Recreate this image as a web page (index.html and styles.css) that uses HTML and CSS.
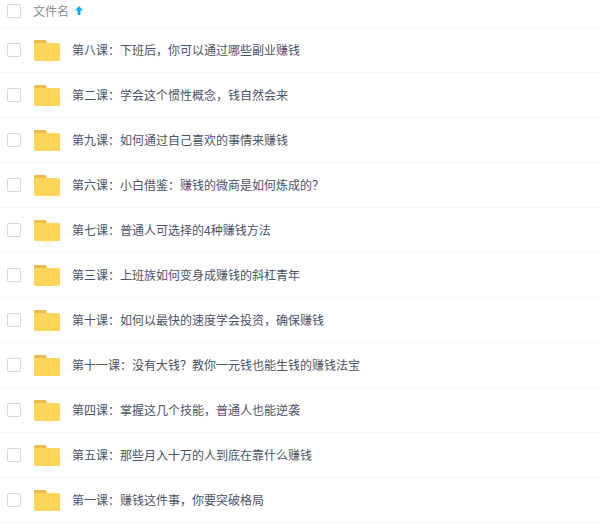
FILE: index.html
```html
<!DOCTYPE html>
<html lang="zh-CN">
<head>
<meta charset="utf-8">
<title>文件列表</title>
<link rel="stylesheet" href="styles.css">
</head>
<body>
<div class="list">
  <div class="head">
    <span class="check"></span>
    <span class="head-name">文件名</span>
    <svg class="arrow" width="8" height="9" viewBox="0 0 8 9"><path d="M4 0 L8 4.4 H5.4 V9 H2.6 V4.4 H0 Z" fill="#09aaff"/></svg>
  </div>
  <div class="row"><span class="check"></span><svg class="folder" width="26" height="21" viewBox="0 0 26 21"><path d="M1 0 H11 Q12.5 0 12.5 1.5 V4 H0 V1 Q0 0 1 0 Z" fill="#eebc4c"/><rect y="3" width="26" height="18" rx="1.5" fill="#ffd659"/></svg><span class="name">第八课：下班后，你可以通过哪些副业赚钱</span></div>
  <div class="row"><span class="check"></span><svg class="folder" width="26" height="21" viewBox="0 0 26 21"><path d="M1 0 H11 Q12.5 0 12.5 1.5 V4 H0 V1 Q0 0 1 0 Z" fill="#eebc4c"/><rect y="3" width="26" height="18" rx="1.5" fill="#ffd659"/></svg><span class="name">第二课：学会这个惯性概念，钱自然会来</span></div>
  <div class="row"><span class="check"></span><svg class="folder" width="26" height="21" viewBox="0 0 26 21"><path d="M1 0 H11 Q12.5 0 12.5 1.5 V4 H0 V1 Q0 0 1 0 Z" fill="#eebc4c"/><rect y="3" width="26" height="18" rx="1.5" fill="#ffd659"/></svg><span class="name">第九课：如何通过自己喜欢的事情来赚钱</span></div>
  <div class="row"><span class="check"></span><svg class="folder" width="26" height="21" viewBox="0 0 26 21"><path d="M1 0 H11 Q12.5 0 12.5 1.5 V4 H0 V1 Q0 0 1 0 Z" fill="#eebc4c"/><rect y="3" width="26" height="18" rx="1.5" fill="#ffd659"/></svg><span class="name">第六课：小白借鉴：赚钱的微商是如何炼成的？</span></div>
  <div class="row"><span class="check"></span><svg class="folder" width="26" height="21" viewBox="0 0 26 21"><path d="M1 0 H11 Q12.5 0 12.5 1.5 V4 H0 V1 Q0 0 1 0 Z" fill="#eebc4c"/><rect y="3" width="26" height="18" rx="1.5" fill="#ffd659"/></svg><span class="name">第七课：普通人可选择的4种赚钱方法</span></div>
  <div class="row"><span class="check"></span><svg class="folder" width="26" height="21" viewBox="0 0 26 21"><path d="M1 0 H11 Q12.5 0 12.5 1.5 V4 H0 V1 Q0 0 1 0 Z" fill="#eebc4c"/><rect y="3" width="26" height="18" rx="1.5" fill="#ffd659"/></svg><span class="name">第三课：上班族如何变身成赚钱的斜杠青年</span></div>
  <div class="row"><span class="check"></span><svg class="folder" width="26" height="21" viewBox="0 0 26 21"><path d="M1 0 H11 Q12.5 0 12.5 1.5 V4 H0 V1 Q0 0 1 0 Z" fill="#eebc4c"/><rect y="3" width="26" height="18" rx="1.5" fill="#ffd659"/></svg><span class="name">第十课：如何以最快的速度学会投资，确保赚钱</span></div>
  <div class="row"><span class="check"></span><svg class="folder" width="26" height="21" viewBox="0 0 26 21"><path d="M1 0 H11 Q12.5 0 12.5 1.5 V4 H0 V1 Q0 0 1 0 Z" fill="#eebc4c"/><rect y="3" width="26" height="18" rx="1.5" fill="#ffd659"/></svg><span class="name">第十一课：没有大钱？教你一元钱也能生钱的赚钱法宝</span></div>
  <div class="row"><span class="check"></span><svg class="folder" width="26" height="21" viewBox="0 0 26 21"><path d="M1 0 H11 Q12.5 0 12.5 1.5 V4 H0 V1 Q0 0 1 0 Z" fill="#eebc4c"/><rect y="3" width="26" height="18" rx="1.5" fill="#ffd659"/></svg><span class="name">第四课：掌握这几个技能，普通人也能逆袭</span></div>
  <div class="row"><span class="check"></span><svg class="folder" width="26" height="21" viewBox="0 0 26 21"><path d="M1 0 H11 Q12.5 0 12.5 1.5 V4 H0 V1 Q0 0 1 0 Z" fill="#eebc4c"/><rect y="3" width="26" height="18" rx="1.5" fill="#ffd659"/></svg><span class="name">第五课：那些月入十万的人到底在靠什么赚钱</span></div>
  <div class="row"><span class="check"></span><svg class="folder" width="26" height="21" viewBox="0 0 26 21"><path d="M1 0 H11 Q12.5 0 12.5 1.5 V4 H0 V1 Q0 0 1 0 Z" fill="#eebc4c"/><rect y="3" width="26" height="18" rx="1.5" fill="#ffd659"/></svg><span class="name">第一课：赚钱这件事，你要突破格局</span></div>
</div>
</body>
</html>
```

FILE: styles.css
```css
html, body {
  margin: 0;
  padding: 0;
  background: #fff;
}

body {
  font-family: "Noto Sans CJK SC", "Liberation Sans", sans-serif;
  font-size: 12px;
  color: #4a5469;
  height: 526px;
  overflow: hidden;
}

.list {
  display: flex;
  flex-direction: column;
}

.head {
  display: flex;
  align-items: center;
  height: 29px;
  margin-bottom: -1px;
  padding: 0 0 6px 7px;
  box-sizing: border-box;
  border-bottom: 1px solid #f2f6fd;
}

.row {
  display: flex;
  align-items: center;
  height: 45px;
  box-sizing: border-box;
  padding-left: 7px;
  border-bottom: 1px solid #f2f6fd;
}

.check {
  flex: none;
  width: 14px;
  height: 14px;
  box-sizing: border-box;
  border: 1px solid #d4d9e4;
  border-radius: 2px;
  background: #fff;
}

.head-name {
  margin-left: 12px;
  padding-bottom: 2px;
  color: #878c9c;
}

.arrow {
  margin-left: 6px;
  margin-top: -1px;
}

.folder {
  flex: none;
  margin-left: 13px;
  margin-top: 1px;
}

.name {
  margin-left: 12px;
  padding-bottom: 2px;
  white-space: nowrap;
}
```
